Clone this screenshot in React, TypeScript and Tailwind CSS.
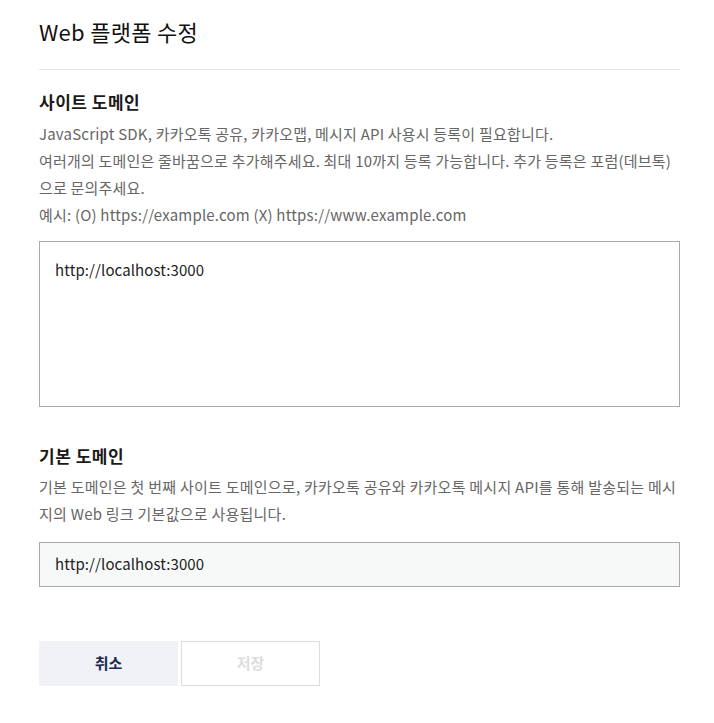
//form for editing web platform domains
//----------------------------------------------------------------------

const siteDomains = 'http://localhost:3000'

//----------------------------------------------------------------------

export default function App() {
  return (
    <div className="bg-white min-h-[723px] w-[714px] pl-[39px] pr-[34px] pt-[15px] text-[#222] font-['Noto_Sans_CJK_KR','Noto_Sans',sans-serif]">
      {/* Header */}
      <h1 className="text-[22px] leading-[32px] tracking-[0.3px] pb-[22px] border-b border-[#e5e5e5] text-[#111]">
        Web 플랫폼 수정
      </h1>

      {/* Site domain */}
      <section className="pt-[19px]">
        <h2 className="text-[17px] font-bold leading-[26px] tracking-[0.5px] text-[#1a1a1a]">
          사이트 도메인
        </h2>
        <p className="mt-[5px] text-[15px] leading-[27px] tracking-[0.2px] text-[#666]">
          JavaScript SDK, 카카오톡 공유, 카카오맵, 메시지 API 사용시 등록이 필요합니다.
          <br />
          여러개의 도메인은 줄바꿈으로 추가해주세요. 최대 10까지 등록 가능합니다. 추가 등록은 포럼(데브톡)으로 문의주세요.
          <br />
          예시: (O) https://example.com (X) https://www.example.com
        </p>
        <textarea
          defaultValue={siteDomains}
          className="mt-[13px] block w-full h-[166px] resize-none border border-[#aaa] px-[15px] py-[16px] text-[15px] leading-[24px] tracking-[0.1px] text-[#222] outline-none"
        />
      </section>

      {/* Default domain */}
      <section className="pt-[36px]">
        <h2 className="text-[17px] font-bold leading-[26px] tracking-[0.5px] text-[#1a1a1a]">
          기본 도메인
        </h2>
        <p className="mt-[4px] text-[15px] leading-[27px] tracking-[0.25px] text-[#666]">
          기본 도메인은 첫 번째 사이트 도메인으로, 카카오톡 공유와 카카오톡 메시지 API를 통해 발송되는 메시지의 Web 링크 기본값으로 사용됩니다.
        </p>
        <div className="mt-[15px] h-[45px] flex items-center border border-[#aaa] bg-[#f7f8f8] px-[15px] text-[15px] tracking-[0.1px] text-[#222]">
          http://localhost:3000
        </div>
      </section>

      {/* Actions */}
      <div className="mt-[54px] flex gap-[3px]">
        <button className="w-[139px] h-[45px] bg-[#f0f2f7] text-[15px] font-bold text-[#1b2a4a]">
          취소
        </button>
        <button className="w-[139px] h-[45px] border border-[#ddd] bg-white text-[15px] font-bold text-[#ddd]">
          저장
        </button>
      </div>
    </div>
  )
}
